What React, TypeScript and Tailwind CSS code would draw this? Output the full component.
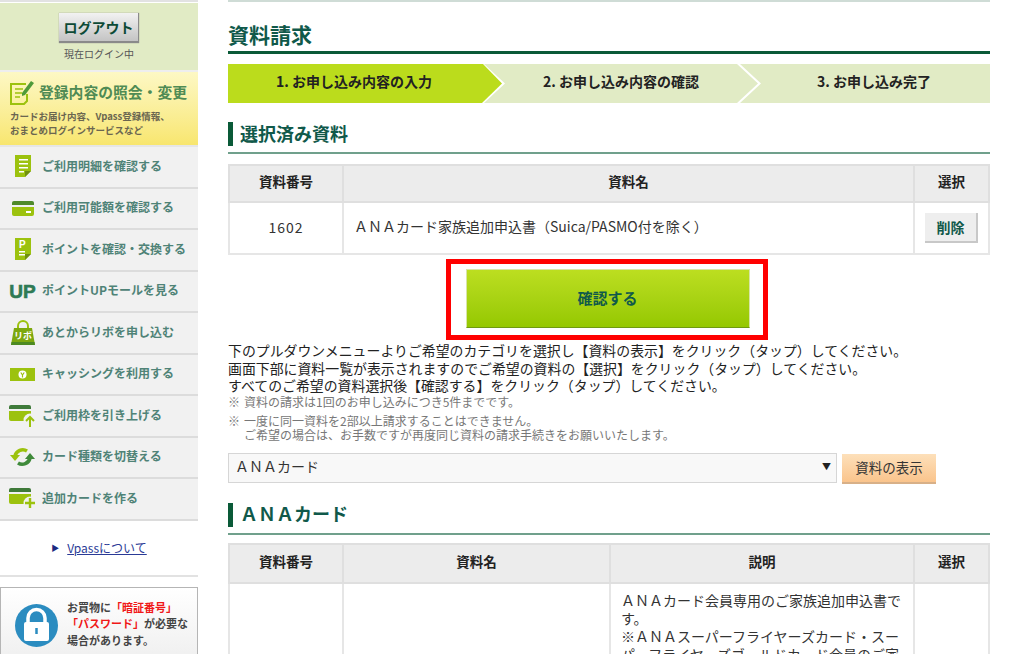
const FONT = "font-['Noto_Sans_CJK_JP','Liberation_Sans',sans-serif]";

const Lime = "#9cc20e";

const DocIcon = ({ p }: { p?: boolean }) => (
  <svg width="18" height="23" viewBox="0 0 18 23">
    <path d="M1 0h16v16l-6 6H1z" fill={Lime} />
    <path d="M11 22v-6h6z" fill="#6f8f10" />
    {p ? (
      <>
        <text x="5" y="10" fontSize="10" fontWeight="700" fill="#fff" fontFamily="Liberation Sans">P</text>
        <rect x="5" y="13" width="6" height="1.5" fill="#fff" />
        <rect x="5" y="16" width="6" height="1.5" fill="#fff" />
      </>
    ) : (
      <>
        <rect x="5" y="4" width="9" height="1.5" fill="#fff" />
        <rect x="5" y="8" width="9" height="1.5" fill="#fff" />
        <rect x="5" y="12" width="9" height="1.5" fill="#fff" />
        <rect x="5" y="16" width="5" height="1.5" fill="#fff" />
      </>
    )}
  </svg>
);

const PlainCard = () => (
  <svg width="22" height="15" viewBox="0 0 22 15">
    <path d="M0 2a2 2 0 0 1 2-2h18a2 2 0 0 1 2 2v2H0z" fill="#4f8a2a" />
    <path d="M0 6h22v7a2 2 0 0 1-2 2H2a2 2 0 0 1-2-2z" fill={Lime} />
    <rect x="14" y="10" width="5" height="2" fill="#fff" />
  </svg>
);

const CardIcon = ({ badge }: { badge: "up" | "plus" }) => (
  <svg width="27" height="23" viewBox="0 0 27 23">
    <path d="M0 3a2 2 0 0 1 2-2h18a2 2 0 0 1 2 2v2H0z" fill="#3f7a3a" />
    <path d="M0 7h22v8a2 2 0 0 1-2 2H2a2 2 0 0 1-2-2z" fill={Lime} />
    <circle cx="21" cy="16" r="6.5" fill="#f1f1f1" />
    {badge === "up" && <path d="M21 23v-10M17 17l4-4 4 4" stroke={Lime} strokeWidth="2" fill="none" />}
    {badge === "plus" && <path d="M21 11v10M16 16h10" stroke={Lime} strokeWidth="2.4" fill="none" />}
  </svg>
);

const BagIcon = () => (
  <svg width="26" height="26" viewBox="0 0 26 26">
    <path d="M8 9V6a5 5 0 0 1 10 0v3" stroke={Lime} strokeWidth="2" fill="none" />
    <path d="M4 8h18l3 17H1z" fill="#7da80f" />
    <path d="M1.5 22h23l.5 3H1z" fill="#4d8a22" />
    <text x="13" y="19" textAnchor="middle" fontSize="9" fontWeight="700" fill="#fff" fontFamily="Noto Sans CJK JP">リボ</text>
  </svg>
);

const CashIcon = () => (
  <svg width="25" height="13" viewBox="0 0 25 13">
    <rect width="25" height="13" fill={Lime} />
    <circle cx="12.5" cy="6.5" r="4" fill="#fff" />
    <path d="M10.8 4.5 12.5 7l1.7-2.5M12.5 7v2.5" stroke={Lime} strokeWidth="1.2" fill="none" />
  </svg>
);

const SwapIcon = () => (
  <svg width="25" height="22" viewBox="0 0 25 22">
    <path d="M5 10A8 8 0 0 1 17 5" stroke={Lime} strokeWidth="3.6" fill="none" />
    <path d="M0 9h10l-5 6z" fill={Lime} />
    <path d="M20 12A8 8 0 0 1 8 17" stroke="#3f8a3a" strokeWidth="3.6" fill="none" />
    <path d="M15 13h10l-5-6z" fill="#3f8a3a" />
  </svg>
);

const menu = [
  { label: "ご利用明細を確認する", icon: <DocIcon /> },
  { label: "ご利用可能額を確認する", icon: <PlainCard /> },
  { label: "ポイントを確認・交換する", icon: <DocIcon p /> },
  {
    label: "ポイントUPモールを見る",
    icon: <span className="text-[19px] leading-none font-bold text-[#2f7a55] font-['Liberation_Sans'] [-webkit-text-stroke:0.6px_#2f7a55]">UP</span>,
  },
  { label: "あとからリボを申し込む", icon: <BagIcon /> },
  { label: "キャッシングを利用する", icon: <CashIcon /> },
  { label: "ご利用枠を引き上げる", icon: <CardIcon badge="up" /> },
  { label: "カード種類を切替える", icon: <SwapIcon /> },
  { label: "追加カードを作る", icon: <CardIcon badge="plus" /> },
];

const Sidebar = () => (
  <aside className="w-[198px] shrink-0 flex flex-col">
    <div className="h-[3px] shrink-0 bg-white border-t-2 border-[#e2e2e2]" />
    <div className="h-[67px] shrink-0 bg-[#e1ebc5] flex flex-col items-center pt-[10px]">
      <div className="w-[80px] h-[30px] shrink-0 flex items-center justify-center text-[14px] font-bold text-[#0d4a36] bg-gradient-to-b from-[#f2f2f2] to-[#c4c4c4] border-b-2 border-r border-[#8a8a8a] shadow-[0_0_1px_#888]">
        ログアウト
      </div>
      <p className="text-[10px] leading-[14px] text-[#555] mt-[4px]">現在ログイン中</p>
    </div>
    <div className="h-[2px] shrink-0 bg-[#eeeeee]" />
    <div className="h-[73px] shrink-0 bg-gradient-to-b from-[#fdf8c4] to-[#f8e66e] pl-[10px] pt-[8px]">
      <div className="flex items-center gap-[5px] h-[24px]">
        <svg width="24" height="25" viewBox="0 0 24 25">
          <path d="M16 4H1v20h13l3-3v-7" fill="none" stroke={Lime} strokeWidth="2" />
          <path d="M5 9h8M5 13h7M5 17h5" stroke={Lime} strokeWidth="1.6" />
          <path d="M12 13 21 1l3 2-9 12-3 1z" fill="#4f9a3a" />
        </svg>
        <span className="text-[14.8px] font-bold text-[#4f8b54] whitespace-nowrap">登録内容の照会・変更</span>
      </div>
      <p className="text-[9.5px] leading-[14px] font-bold text-[#6b6650] mt-[5px] whitespace-nowrap">
        カードお届け内容、Vpass登録情報、
        <br />
        おまとめログインサービスなど
      </p>
    </div>
    <div className="h-[2px] shrink-0 bg-[#e6e6e6]" />
    {menu.map((m) => (
      <div key={m.label} className="h-[41.5px] shrink-0 bg-[#f1f1f1] border-b-2 border-[#dcdcdc] flex items-center">
        <div className="w-[45px] -mr-[3px] shrink-0 flex justify-center">{m.icon}</div>
        <span className="pb-[2px] text-[12px] font-bold text-[#4f8377] whitespace-nowrap">{m.label}</span>
      </div>
    ))}
    <div className="h-[56px] shrink-0 flex items-center justify-center border-b-2 border-[#e2e2e2]">
      <span className="text-[8px] text-[#1c2a80] mr-[8px]">▶</span>
      <span className="text-[12px] text-[#2a3a96] underline">Vpassについて</span>
    </div>
    <div className="mt-[10px] h-[70px] shrink-0 border-t border-x border-[#b5b5b5] bg-gradient-to-b from-white to-[#f0f0f0] flex pl-[14px] pt-[16px] gap-[9px]">
      <svg width="43" height="43" viewBox="0 0 43 43" className="shrink-0">
        <circle cx="21.5" cy="21.5" r="21.5" fill="#2b8cc0" />
        <path d="M13 19v-5a8.5 8.5 0 0 1 17 0v5" stroke="#fff" strokeWidth="3.5" fill="none" />
        <rect x="9" y="18" width="25" height="19" rx="2" fill="#fff" />
        <path d="M21.5 24v6" stroke="#2b8cc0" strokeWidth="2.5" />
      </svg>
      <p className="-mt-[5px] text-[11px] leading-[16.5px] font-bold text-[#444] whitespace-nowrap">
        お買物に<span className="text-[#f01818]">「暗証番号」</span>
        <br />
        <span className="text-[#f01818]">「パスワード」</span>が必要な
        <br />
        場合があります。
      </p>
    </div>
  </aside>
);

const SectionHead = ({ title }: { title: string }) => (
  <div className="border-b-2 border-[#70a08c] h-[32px]">
    <h3 className="h-[24px] pb-[3px] border-l-[5px] border-[#0a5a38] pl-[7px] flex items-center text-[18px] leading-none font-bold text-[#10594a]">
      {title}
    </h3>
  </div>
);

const Steps = () => (
  <div className="flex h-[39px] mt-[10px] text-[14px] font-bold text-[#222]">
    <div className="w-[274px] shrink-0 bg-[#bbdc1c] flex items-center justify-center pr-[22px] pb-[5px] [clip-path:polygon(0_0,255px_0,100%_50%,254px_100%,0_100%)]">
      1. お申し込み内容の入力
    </div>
    <div className="w-[274px] shrink-0 -ml-[18px] bg-[#e1ebc5] flex items-center justify-center pb-[5px] [clip-path:polygon(0_0,253px_0,100%_50%,253px_100%,0_100%,21px_50%)]">
      2. お申し込み内容の確認
    </div>
    <div className="flex-1 -ml-[18px] bg-[#e1ebc5] flex items-center justify-center pl-[18px] pb-[5px] [clip-path:polygon(0_0,100%_0,100%_100%,0_100%,21px_50%)]">
      3. お申し込み完了
    </div>
  </div>
);

const th = "border-2 border-[#dfdfdf] bg-[#ececec] text-[13.5px] font-bold text-[#222] pb-[4px] text-center";
const td = "border-2 border-[#e6e6e6] text-[14px] text-[#333]";

const App = () => (
  <div className={`${FONT} w-[1024px] h-[654px] overflow-hidden bg-white flex`}>
    <Sidebar />
    <main className="w-[762px] ml-[30px] shrink-0">
      <div className="h-[2px] bg-[#cfdcd6]" />
      <h2 className="mt-[21px] h-[28px] pb-[6px] flex items-center text-[21px] font-bold text-[#10594a] leading-none">資料請求</h2>
      <div className="h-[3px] bg-[#0a5a38]" />
      <Steps />
      <div className="mt-[19px]">
        <SectionHead title="選択済み資料" />
      </div>
      <table className="mt-[10px] w-full table-fixed border-collapse">
        <colgroup>
          <col className="w-[114px]" />
          <col />
          <col className="w-[75px]" />
        </colgroup>
        <thead>
          <tr>
            <th className={`${th} h-[37px]`}>資料番号</th>
            <th className={`${th} h-[37px]`}>資料名</th>
            <th className={`${th} h-[37px]`}>選択</th>
          </tr>
        </thead>
        <tbody>
          <tr className="h-[52px]">
            <td className={`${td} text-center tracking-[1px] pb-[2px]`}>1602</td>
            <td className={`${td} pl-[10px] pb-[3px]`}>ＡＮＡカード家族追加申込書（Suica/PASMO付を除く）</td>
            <td className={td}>
              <div className="mx-auto w-[53px] h-[30px] flex items-center justify-center bg-[#eeeeee] border-b-2 border-r-2 border-[#c8c8c8] text-[14px] font-bold text-[#10594a]">
                削除
              </div>
            </td>
          </tr>
        </tbody>
      </table>
      <div className="mt-[4px] flex justify-center pr-[4px]">
        <div className="w-[322px] h-[81px] border-[5px] border-[#ff0000] pt-[5px] pl-[1px] flex justify-center">
          <div className="w-[284px] h-[59px] flex items-center justify-center bg-gradient-to-b from-[#bcde20] to-[#95c800] border border-[#d8e4a8] border-b-[#6f9a10] text-[15px] font-bold text-[#10594a]">
            確認する
          </div>
        </div>
      </div>
      <p className="mt-[2px] text-[13.9px] leading-[17.5px] text-[#222] whitespace-nowrap">
        下のプルダウンメニューよりご希望のカテゴリを選択し【資料の表示】をクリック（タップ）してください。
        <br />
        画面下部に資料一覧が表示されますのでご希望の資料の【選択】をクリック（タップ）してください。
        <br />
        すべてのご希望の資料選択後【確認する】をクリック（タップ）してください。
      </p>
      <div className="text-[12px] text-[#777] leading-[14px] flex">
        <span className="w-[16px] shrink-0">※</span>
        <span>資料の請求は1回のお申し込みにつき5件までです。</span>
      </div>
      <div className="text-[12px] text-[#777] leading-[14px] flex mt-[5px]">
        <span className="w-[16px] shrink-0">※</span>
        <span className="whitespace-nowrap">
          一度に同一資料を2部以上請求することはできません。
          <br />
          ご希望の場合は、お手数ですが再度同じ資料の請求手続きをお願いいたします。
        </span>
      </div>
      <div className="mt-[11px] flex items-start">
        <div className="w-[609px] h-[30px] pb-[2px] flex items-center justify-between pl-[6px] pr-[5px] bg-[#f8f8f8] border border-[#d6d6d6] text-[14px] text-[#333]">
          <span>ＡＮＡカード</span>
          <span className="text-[9px] text-[#222]">▼</span>
        </div>
        <div className="ml-[5px] mt-[1px] w-[94px] h-[30px] flex items-center justify-center bg-gradient-to-b from-[#fde0ba] to-[#fac48c] border-b-2 border-[#d8b088] text-[13.5px] text-[#333]">
          資料の表示
        </div>
      </div>
      <div className="mt-[19px]">
        <SectionHead title="ＡＮＡカード" />
      </div>
      <table className="mt-[8px] w-full table-fixed border-collapse">
        <colgroup>
          <col className="w-[114px]" />
          <col className="w-[267px]" />
          <col />
          <col className="w-[75px]" />
        </colgroup>
        <thead>
          <tr>
            <th className={`${th} h-[39px]`}>資料番号</th>
            <th className={`${th} h-[39px]`}>資料名</th>
            <th className={`${th} h-[39px]`}>説明</th>
            <th className={`${th} h-[39px]`}>選択</th>
          </tr>
        </thead>
        <tbody>
          <tr>
            <td className={td} />
            <td className={td} />
            <td className={`${td} pl-[10px] pr-[6px] pt-[7px] leading-[18px] align-top`}>
              ＡＮＡカード会員専用のご家族追加申込書です。
              <br />
              ※ＡＮＡスーパーフライヤーズカード・スーパーフライヤーズゴールドカード会員のご家族の方は
            </td>
            <td className={td} />
          </tr>
        </tbody>
      </table>
    </main>
  </div>
);

export default App;
